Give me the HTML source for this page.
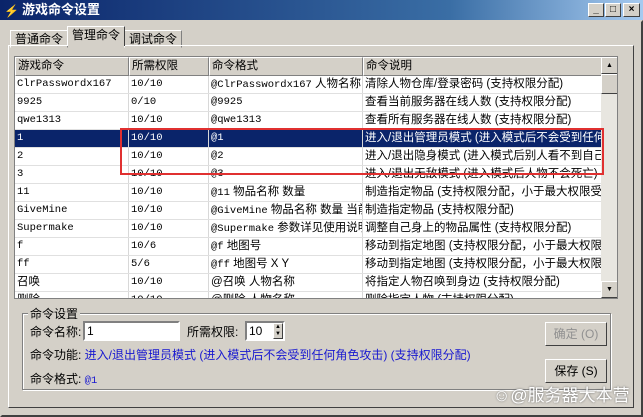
<!DOCTYPE html>
<html><head><meta charset="utf-8"><style>
*{margin:0;padding:0;box-sizing:border-box}
body{width:643px;height:417px;background:#d4d0c8;font:12px "Liberation Sans","Noto Sans CJK SC",sans-serif;position:relative;overflow:hidden;color:#000}
.a{position:absolute}
.title{left:0;top:0;width:643px;height:20px;background:linear-gradient(90deg,#0a246a,#3a6ea5 70%,#a6caf0);color:#fff;font-weight:bold;font-size:13px;line-height:20px;padding-left:22px}
.tb{top:3px;width:16px;height:14px;background:#d4d0c8;border:1px solid;border-color:#fff #404040 #404040 #fff;font-size:10px;line-height:11px;text-align:center;color:#000;font-weight:bold}
.tab{top:28px;height:18px;line-height:16px;padding:0 4px;font-size:12px}
.lv{left:14px;top:56px;width:604px;height:243px;background:#fff;border:1px solid #808080;overflow:hidden}
.row{position:absolute;left:0;height:18px;width:587px;border-bottom:1px solid #e0e0e0;font-size:11.5px;line-height:17px;white-space:nowrap}
.row span{position:absolute;top:0;padding-left:2px;overflow:hidden;height:17px;border-right:1px solid #d8d8d8}
.c1{left:0;width:114px}.c2{left:114px;width:80px}.c3{left:194px;width:154px}.c4{left:348px;width:240px}
.mono{font-family:"Liberation Mono","Noto Sans CJK SC",monospace;font-size:10.5px}
.hdr{background:#d4d0c8;height:19px}
.hdr span{border:1px solid;border-color:#fff #808080 #808080 #fff;height:19px}
.sel{background:#0a246a;color:#fff}
.btn{background:#d4d0c8;border:1px solid;border-color:#fff #404040 #404040 #fff;text-align:center;font-size:12px}
</style></head><body>
<div class="a title">游戏命令设置</div>
<div class="a" style="left:4px;top:4px;color:#ffd040;font-size:12px;font-weight:bold">⚡</div>
<div class="a tb" style="left:588px">_</div><div class="a tb" style="left:605px">□</div><div class="a tb" style="left:623px;width:17px">×</div>
<div class="a" style="left:0;top:20px;width:643px;height:397px;border:2px solid;border-color:#d4d0c8 #404040 #404040 #d4d0c8"></div>
<div class="a tab" style="left:10px;top:30px;border:1px solid;border-color:#fff #808080 transparent #fff">普通命令</div>
<div class="a tab" style="left:67px;top:26px;height:20px;background:#d4d0c8;border:1px solid;border-bottom:none;border-color:#fff #404040 transparent #fff;z-index:2">管理命令</div>
<div class="a tab" style="left:124px;top:30px;border:1px solid;border-color:#fff #808080 transparent #fff">调试命令</div>
<div class="a" style="left:8px;top:45px;width:626px;height:363px;border:1px solid;border-color:#fff #404040 #404040 #fff"></div>
<div class="a lv">
<div class="row hdr" style="top:0"><span class="c1">游戏命令</span><span class="c2">所需权限</span><span class="c3">命令格式</span><span class="c4">命令说明</span></div>
<div class="row" style="top:19px"><span class="c1 mono">ClrPasswordx167</span><span class="c2 mono">10/10</span><span class="c3"><i class="mono" style="font-style:normal">@ClrPasswordx167</i> 人物名称</span><span class="c4">清除人物仓库/登录密码 (支持权限分配)</span></div>
<div class="row" style="top:37px"><span class="c1 mono">9925</span><span class="c2 mono">0/10</span><span class="c3 mono">@9925</span><span class="c4">查看当前服务器在线人数 (支持权限分配)</span></div>
<div class="row" style="top:55px"><span class="c1 mono">qwe1313</span><span class="c2 mono">10/10</span><span class="c3 mono">@qwe1313</span><span class="c4">查看所有服务器在线人数 (支持权限分配)</span></div>
<div class="row sel" style="top:73px"><span class="c1 mono">1</span><span class="c2 mono">10/10</span><span class="c3 mono">@1</span><span class="c4">进入/退出管理员模式 (进入模式后不会受到任何</span></div>
<div class="row" style="top:91px"><span class="c1 mono">2</span><span class="c2 mono">10/10</span><span class="c3 mono">@2</span><span class="c4">进入/退出隐身模式 (进入模式后别人看不到自己</span></div>
<div class="row" style="top:109px"><span class="c1 mono">3</span><span class="c2 mono">10/10</span><span class="c3 mono">@3</span><span class="c4">进入/退出无敌模式 (进入模式后人物不会死亡)</span></div>
<div class="row" style="top:127px"><span class="c1 mono">11</span><span class="c2 mono">10/10</span><span class="c3"><i class="mono" style="font-style:normal">@11</i> 物品名称 数量</span><span class="c4">制造指定物品 (支持权限分配，小于最大权限受</span></div>
<div class="row" style="top:145px"><span class="c1 mono">GiveMine</span><span class="c2 mono">10/10</span><span class="c3"><i class="mono" style="font-style:normal">@GiveMine</i> 物品名称 数量 当前</span><span class="c4">制造指定物品 (支持权限分配)</span></div>
<div class="row" style="top:163px"><span class="c1 mono">Supermake</span><span class="c2 mono">10/10</span><span class="c3"><i class="mono" style="font-style:normal">@Supermake</i> 参数详见使用说明</span><span class="c4">调整自己身上的物品属性 (支持权限分配)</span></div>
<div class="row" style="top:181px"><span class="c1 mono">f</span><span class="c2 mono">10/6</span><span class="c3"><i class="mono" style="font-style:normal">@f</i> 地图号</span><span class="c4">移动到指定地图 (支持权限分配，小于最大权限</span></div>
<div class="row" style="top:199px"><span class="c1 mono">ff</span><span class="c2 mono">5/6</span><span class="c3"><i class="mono" style="font-style:normal">@ff</i> 地图号 X Y</span><span class="c4">移动到指定地图 (支持权限分配，小于最大权限</span></div>
<div class="row" style="top:217px"><span class="c1">召唤</span><span class="c2 mono">10/10</span><span class="c3">@召唤 人物名称</span><span class="c4">将指定人物召唤到身边 (支持权限分配)</span></div>
<div class="row" style="top:235px"><span class="c1">删除</span><span class="c2 mono">10/10</span><span class="c3">@删除 人物名称</span><span class="c4">删除指定人物 (支持权限分配)</span></div>
<div class="a" style="left:586px;top:0;width:17px;height:241px;background:#e8e6e0">
<div class="a btn" style="left:0;top:0;width:17px;height:17px;font-size:7px;line-height:15px">▲</div>
<div class="a btn" style="left:0;top:17px;width:17px;height:20px"></div>
<div class="a btn" style="left:0;top:224px;width:17px;height:17px;font-size:7px;line-height:15px">▼</div>
</div></div>
<div class="a" style="left:120px;top:128px;width:484px;height:47px;border:2px solid #e03030"></div>
<div class="a" style="left:22px;top:313px;width:589px;height:77px;border:1px solid #808080;box-shadow:1px 1px 0 #fff inset,1px 1px 0 #fff"></div>
<div class="a" style="left:28px;top:305px;background:#d4d0c8;padding:0 2px">命令设置</div>
<div class="a" style="left:30px;top:323px">命令名称:</div>
<div class="a" style="left:83px;top:321px;width:97px;height:20px;background:#fff;border:2px solid;border-color:#808080 #fff #fff #808080;padding-left:2px;line-height:16px">1</div>
<div class="a" style="left:187px;top:323px">所需权限:</div>
<div class="a" style="left:245px;top:321px;width:40px;height:20px;background:#fff;border:2px solid;border-color:#808080 #fff #fff #808080;padding-left:2px;line-height:16px">10</div>
<div class="a btn" style="left:273px;top:323px;width:10px;height:16px;font-size:6px;line-height:7px">▲<br>▼</div>
<div class="a" style="left:30px;top:346px">命令功能: <span style="color:#1818d0">进入/退出管理员模式 (进入模式后不会受到任何角色攻击) (支持权限分配)</span></div>
<div class="a" style="left:30px;top:370px">命令格式: <span style="color:#1818d0" class="mono">@1</span></div>
<div class="a btn" style="left:545px;top:322px;width:62px;height:24px;line-height:22px;color:#909090">确定 (O)</div>
<div class="a btn" style="left:545px;top:359px;width:62px;height:24px;line-height:22px">保存 (S)</div>
<div class="a" style="left:493px;top:381px;font-size:17px;color:#fff;text-shadow:0 0 2px #666">☺@服务器大本营</div>
</body></html>
